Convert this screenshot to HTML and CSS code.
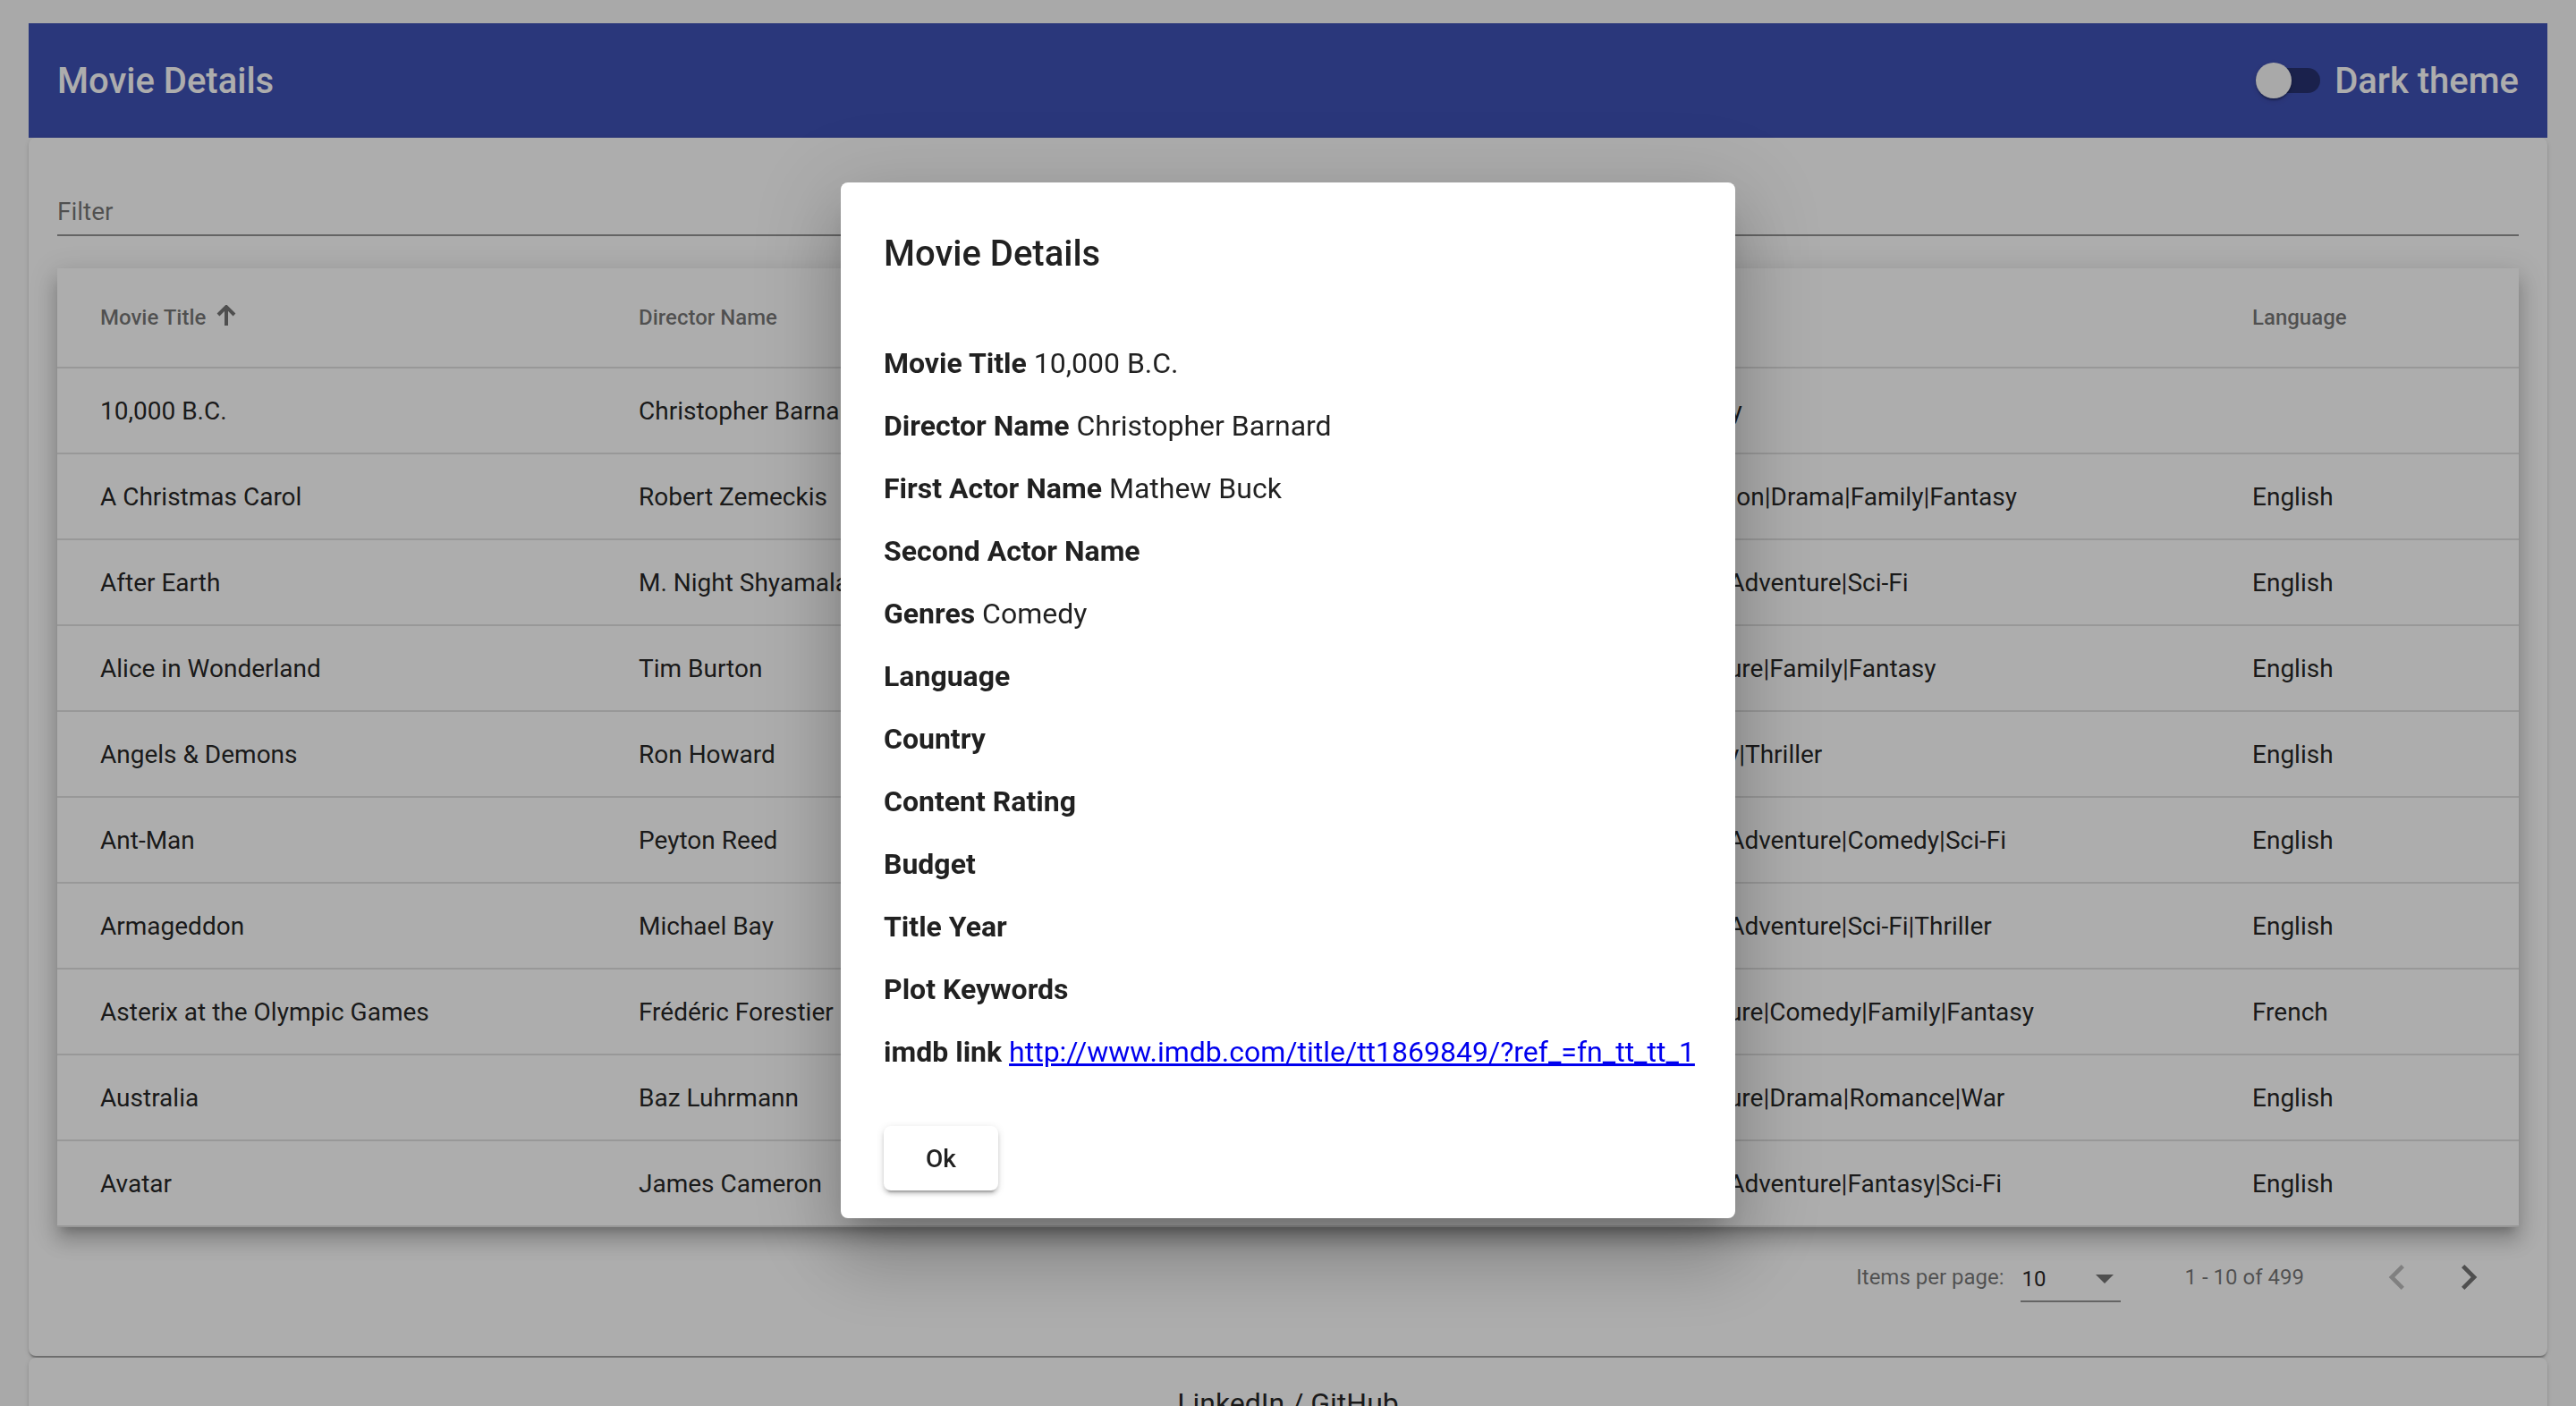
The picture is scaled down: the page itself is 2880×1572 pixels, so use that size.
FILE: index.html
```html
<!DOCTYPE html>
<html lang="en">
<head>
<meta charset="utf-8">
<title>Movie Details</title>
<link rel="stylesheet" href="styles.css">
</head>
<body>
<div class="page">
  <header class="toolbar">
    <span class="toolbar-title">Movie Details</span>
    <div class="theme-toggle">
      <span class="toggle">
        <span class="toggle-bar"></span>
        <span class="toggle-thumb"></span>
      </span>
      <span class="toggle-label">Dark theme</span>
    </div>
  </header>

  <main class="card">
    <div class="filter"><span class="filter-label">Filter</span></div>

    <div class="table">
      <div class="row head">
        <div class="cell first">Movie Title
          <svg class="sort-arrow" width="22" height="24" viewBox="0 0 22 24"><path d="M11 3 V23" stroke="#757575" stroke-width="4" fill="none"/><path d="M2 11 L11 2 L20 11" stroke="#757575" stroke-width="4" fill="none" stroke-linejoin="miter"/></svg>
        </div>
        <div class="cell">Director Name</div>
        <div class="cell">First Actor Name</div>
        <div class="cell">Genres</div>
        <div class="cell last">Language</div>
      </div>
      <div class="row"><div class="cell first">10,000 B.C.</div><div class="cell">Christopher Barnard</div><div class="cell">Mathew Buck</div><div class="cell">Comedy</div><div class="cell last"></div></div>
      <div class="row"><div class="cell first">A Christmas Carol</div><div class="cell">Robert Zemeckis</div><div class="cell">Cary Elwes</div><div class="cell">Animation|Drama|Family|Fantasy</div><div class="cell last">English</div></div>
      <div class="row"><div class="cell first">After Earth</div><div class="cell">M. Night Shyamalan</div><div class="cell">Jaden Smith</div><div class="cell">Action|Adventure|Sci-Fi</div><div class="cell last">English</div></div>
      <div class="row"><div class="cell first">Alice in Wonderland</div><div class="cell">Tim Burton</div><div class="cell">Johnny Depp</div><div class="cell">Adventure|Family|Fantasy</div><div class="cell last">English</div></div>
      <div class="row"><div class="cell first">Angels &amp; Demons</div><div class="cell">Ron Howard</div><div class="cell">Tom Hanks</div><div class="cell">Mystery|Thriller</div><div class="cell last">English</div></div>
      <div class="row"><div class="cell first">Ant-Man</div><div class="cell">Peyton Reed</div><div class="cell">Paul Rudd</div><div class="cell">Action|Adventure|Comedy|Sci-Fi</div><div class="cell last">English</div></div>
      <div class="row"><div class="cell first">Armageddon</div><div class="cell">Michael Bay</div><div class="cell">Bruce Willis</div><div class="cell">Action|Adventure|Sci-Fi|Thriller</div><div class="cell last">English</div></div>
      <div class="row"><div class="cell first">Asterix at the Olympic Games</div><div class="cell">Frédéric Forestier</div><div class="cell">Gérard Depardieu</div><div class="cell">Adventure|Comedy|Family|Fantasy</div><div class="cell last">French</div></div>
      <div class="row"><div class="cell first">Australia</div><div class="cell">Baz Luhrmann</div><div class="cell">Hugh Jackman</div><div class="cell">Adventure|Drama|Romance|War</div><div class="cell last">English</div></div>
      <div class="row"><div class="cell first">Avatar</div><div class="cell">James Cameron</div><div class="cell">CCH Pounder</div><div class="cell">Action|Adventure|Fantasy|Sci-Fi</div><div class="cell last">English</div></div>
    </div>

    <div class="paginator">
      <span class="page-size-label">Items per page:</span>
      <div class="page-size">
        <span class="page-size-value">10</span>
        <svg class="select-arrow" width="20" height="10" viewBox="0 0 20 10"><path d="M0 0 H20 L10 10 Z" fill="#757575"/></svg>
      </div>
      <span class="range-label">1 - 10 of 499</span>
      <button class="nav-btn disabled" type="button">
        <svg width="56" height="56" viewBox="0 0 24 24"><path d="M15.41 7.41L14 6l-6 6 6 6 1.41-1.41L10.83 12z" fill="#bdbdbd"/></svg>
      </button>
      <button class="nav-btn" type="button">
        <svg width="56" height="56" viewBox="0 0 24 24"><path d="M10 6L8.59 7.41 13.17 12l-4.58 4.59L10 18l6-6z" fill="#757575"/></svg>
      </button>
    </div>
  </main>

  <footer class="card footer">
    <span class="footer-links"><span>LinkedIn</span> / <span>GitHub</span></span>
  </footer>
</div>

<div class="backdrop"></div>
<div class="dialog-layer">
  <div class="dialog">
    <h2 class="dialog-title">Movie Details</h2>
    <div class="dialog-content">
      <div class="detail"><b>Movie Title</b> 10,000 B.C.</div>
      <div class="detail"><b>Director Name</b> Christopher Barnard</div>
      <div class="detail"><b>First Actor Name</b> Mathew Buck</div>
      <div class="detail"><b>Second Actor Name</b></div>
      <div class="detail"><b>Genres</b> Comedy</div>
      <div class="detail"><b>Language</b></div>
      <div class="detail"><b>Country</b></div>
      <div class="detail"><b>Content Rating</b></div>
      <div class="detail"><b>Budget</b></div>
      <div class="detail"><b>Title Year</b></div>
      <div class="detail"><b>Plot Keywords</b></div>
      <div class="detail"><b>imdb link</b> <a href="#">http://www.imdb.com/title/tt1869849/?ref_=fn_tt_tt_1</a></div>
    </div>
    <div class="dialog-actions">
      <button class="ok-btn" type="button">Ok</button>
    </div>
  </div>
</div>
</body>
</html>
```

FILE: styles.css
```css
* { box-sizing: border-box; }

html, body {
  margin: 0;
  padding: 0;
  background: #fafafa;
  font-family: Roboto, "Helvetica Neue", "Liberation Sans", sans-serif;
  color: rgba(0, 0, 0, 0.87);
}

.page {
  padding: 26px 32px 0;
}

/* Toolbar */
.toolbar {
  height: 128px;
  background: #3f51b5;
  color: #fff;
  display: flex;
  align-items: center;
  justify-content: space-between;
  padding: 0 32px;
}

.toolbar-title {
  font-size: 40px;
  font-weight: 500;
  letter-spacing: 0;
}

.theme-toggle {
  display: flex;
  align-items: center;
}

.toggle {
  position: relative;
  width: 72px;
  height: 40px;
  display: flex;
  align-items: center;
  margin-right: 16px;
}

.toggle-bar {
  width: 72px;
  height: 28px;
  border-radius: 14px;
  background: rgba(0, 0, 0, 0.38);
}

.toggle-thumb {
  position: absolute;
  left: 0;
  top: 0;
  width: 40px;
  height: 40px;
  border-radius: 50%;
  background: #fafafa;
  box-shadow: 0 4px 2px -2px rgba(0,0,0,.2), 0 2px 2px 0 rgba(0,0,0,.14), 0 2px 6px 0 rgba(0,0,0,.12);
}

.toggle-label {
  font-size: 40px;
  font-weight: 500;
}

/* Card */
.card {
  background: #fff;
  border-radius: 8px;
  box-shadow: 0 4px 2px -2px rgba(0,0,0,.2), 0 2px 2px 0 rgba(0,0,0,.14), 0 2px 6px 0 rgba(0,0,0,.12);
  padding: 32px;
}

/* Filter */
.filter {
  padding: 35px 0 9px;
  border-bottom: 2px solid rgba(0, 0, 0, 0.42);
}

.filter-label {
  display: block;
  font-size: 28px;
  line-height: 32px;
  color: rgba(0, 0, 0, 0.54);
}

/* Table */
.table {
  margin-top: 36px;
  background: #fff;
  box-shadow: 0 10px 10px -6px rgba(0,0,0,.2), 0 16px 20px 2px rgba(0,0,0,.14), 0 6px 28px 4px rgba(0,0,0,.12);
}

.row {
  display: grid;
  grid-template-columns: 650px 571px 560px 673px 1fr;
  height: 96px;
  border-bottom: 2px solid rgba(0, 0, 0, 0.12);
  font-size: 28px;
  color: rgba(0, 0, 0, 0.87);
}

.row.head {
  height: 112px;
  font-size: 24px;
  font-weight: 500;
  color: rgba(0, 0, 0, 0.54);
}

.cell {
  display: flex;
  align-items: center;
  white-space: nowrap;
  overflow: hidden;
}

.cell.first { padding-left: 48px; }
.cell.last { padding-right: 48px; }

.sort-arrow {
  margin-left: 12px;
  margin-top: -4px;
}

/* Paginator */
.paginator {
  height: 112px;
  display: flex;
  align-items: center;
  justify-content: flex-end;
  padding: 0 16px;
  font-size: 24px;
  color: rgba(0, 0, 0, 0.54);
}

.page-size-label {
  margin-right: 18px;
}

.page-size {
  width: 112px;
  display: flex;
  align-items: center;
  justify-content: space-between;
  padding: 16px 8px 10px 2px;
  border-bottom: 2px solid rgba(0, 0, 0, 0.42);
  line-height: 28px;
}

.page-size-value {
  color: rgba(0, 0, 0, 0.87);
}

.range-label {
  margin: 0 64px 0 72px;
}

.nav-btn {
  width: 80px;
  height: 80px;
  border: 0;
  padding: 0;
  background: transparent;
  display: flex;
  align-items: center;
  justify-content: center;
}

/* Footer */
.footer {
  margin-top: 2px;
  text-align: center;
  font-size: 32px;
  height: 200px;
  border-radius: 8px 8px 0 0;
}

.footer-links {
  color: rgba(0, 0, 0, 0.87);
}

/* Dialog */
.backdrop {
  position: fixed;
  inset: 0;
  background: rgba(0, 0, 0, 0.32);
}

.dialog-layer {
  position: fixed;
  inset: 0;
  display: flex;
  align-items: flex-start;
  justify-content: center;
  padding-top: 204px;
}

.dialog {
  width: 1000px;
  background: #fff;
  border-radius: 8px;
  padding: 48px 48px 31px;
  box-shadow: 0 22px 30px -14px rgba(0,0,0,.2), 0 48px 76px 6px rgba(0,0,0,.14), 0 18px 92px 16px rgba(0,0,0,.12);
}

.dialog-title {
  margin: 0;
  font-size: 40px;
  line-height: 64px;
  font-weight: 500;
  color: rgba(0, 0, 0, 0.87);
}

.dialog-content {
  margin-top: 70px;
  display: flex;
  flex-direction: column;
  gap: 30px;
}

.detail {
  font-size: 32px;
  line-height: 40px;
  height: 40px;
  white-space: nowrap;
  color: rgba(0, 0, 0, 0.87);
}

.detail b {
  font-weight: 700;
}

.detail a {
  color: #0000ee;
  text-decoration: underline;
}

.dialog-actions {
  margin-top: 63px;
  display: flex;
}

.ok-btn {
  min-width: 128px;
  height: 72px;
  padding: 0 32px;
  border: 0;
  border-radius: 8px;
  background: #fff;
  font-family: Roboto, "Helvetica Neue", "Liberation Sans", sans-serif;
  font-size: 28px;
  font-weight: 500;
  color: rgba(0, 0, 0, 0.87);
  box-shadow: 0 6px 2px -4px rgba(0,0,0,.2), 0 4px 4px 0 rgba(0,0,0,.14), 0 2px 10px 0 rgba(0,0,0,.12);
}
```
